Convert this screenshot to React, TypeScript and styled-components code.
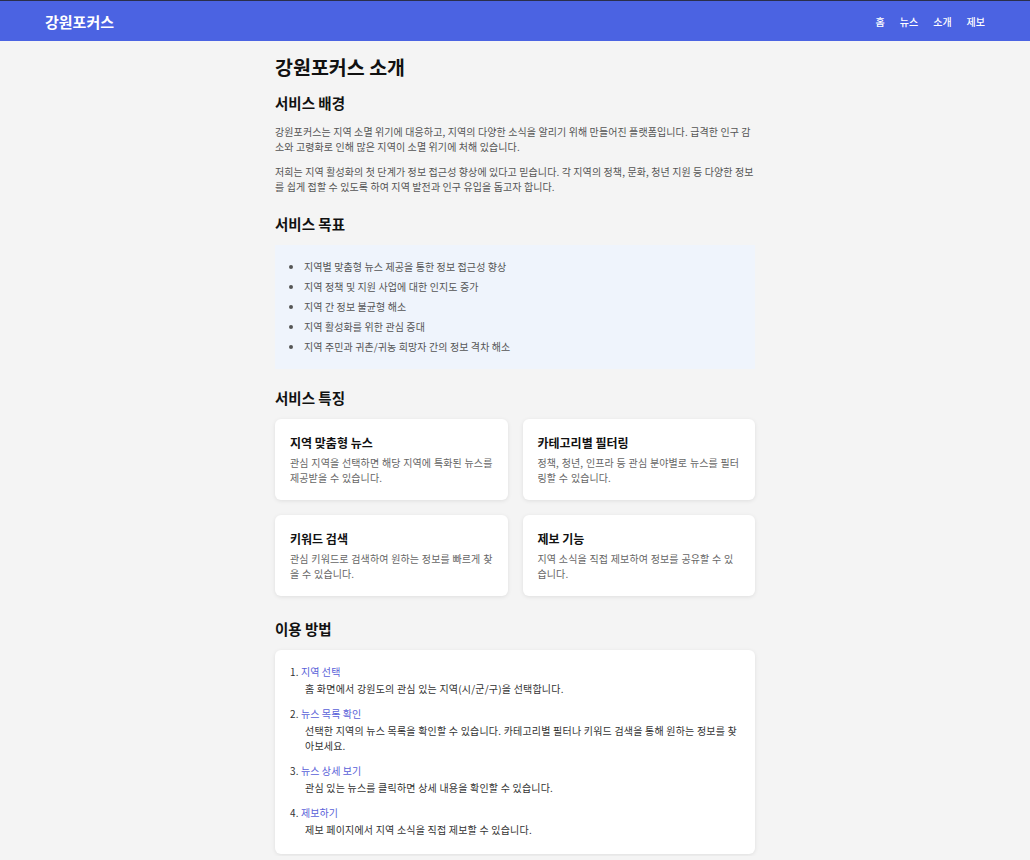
import React from "react";
import styled, { createGlobalStyle } from "styled-components";

const GlobalStyle = createGlobalStyle`
  html, body { margin: 0; padding: 0; }
  body {
    background: #f4f4f4;
    font-family: "Noto Sans CJK KR", "Noto Sans", sans-serif;
    color: #222;
  }
`;

const Header = styled.header`
  height: 40px;
  border-top: 1px solid #2a2f4a;
  background: #4b63e2;
  display: flex;
  align-items: center;
  justify-content: space-between;
  padding: 0 45px;
`;

const Logo = styled.div`
  color: #fff;
  font-size: 15px;
  font-weight: 700;
`;

const Nav = styled.nav`
  display: flex;
  gap: 15px;
`;

const NavLink = styled.a`
  color: #fff;
  font-size: 10px;
  font-weight: 500;
  text-decoration: none;
`;

const Main = styled.main`
  width: 480px;
  margin: 0 auto;
  padding: 14px 0 2px;
`;

const Title = styled.h1`
  font-size: 19.5px;
  line-height: 24px;
  font-weight: 700;
  margin: 0 0 14px;
  color: #111;
`;

const Section = styled.section<{ $gap?: number }>`
  margin-bottom: ${(p) => p.$gap ?? 20}px;
  &:last-child { margin-bottom: 0; }
`;

const H2 = styled.h2`
  font-size: 14.5px;
  line-height: 20px;
  font-weight: 700;
  margin: 0 0 11px;
  color: #111;
`;

const Para = styled.p`
  font-size: 10px;
  line-height: 15px;
  letter-spacing: 0.1px;
  color: #555;
  margin: 0 0 10px;
  &:last-child { margin-bottom: 0; }
`;

const GoalBox = styled.div`
  background: #eff4fc;
  padding: 12px 15px 12px;
`;

const GoalList = styled.ul`
  margin: 0;
  padding-left: 14px;
`;

const GoalItem = styled.li`
  font-size: 10px;
  line-height: 20px;
  letter-spacing: 0.1px;
  color: #555;
`;

const CardGrid = styled.div`
  display: grid;
  grid-template-columns: 1fr 1fr;
  column-gap: 15px;
  row-gap: 15px;
`;

const Card = styled.div<{ $pad?: string }>`
  background: #fff;
  border-radius: 6px;
  box-shadow: 0 1px 4px rgba(0, 0, 0, 0.09);
  padding: ${(p) => p.$pad || "15px 15px 15px"};
`;

const CardTitle = styled.h3`
  font-size: 12px;
  line-height: 18px;
  font-weight: 700;
  margin: 0 0 3px;
  color: #111;
`;

const CardDesc = styled.p`
  font-size: 10px;
  line-height: 15px;
  letter-spacing: 0.1px;
  word-spacing: 0.4px;
  color: #666;
  margin: 0;
`;

const StepList = styled.ol`
  list-style: none;
  margin: 0;
  padding: 0;
`;

const Step = styled.li`
  margin-bottom: 10px;
  &:last-child { margin-bottom: 0; }
`;

const StepHead = styled.div`
  font-size: 10px;
  line-height: 16px;
  letter-spacing: 0.1px;
  color: #333;
`;

const StepName = styled.span`
  color: #5a5fd8;
`;

const StepDesc = styled.div`
  font-size: 10px;
  line-height: 15px;
  letter-spacing: 0.2px;
  color: #333;
  margin-top: 1px;
  padding-left: 15px;
`;

const features = [
  { t: "지역 맞춤형 뉴스", d: "관심 지역을 선택하면 해당 지역에 특화된 뉴스를 제공받을 수 있습니다." },
  { t: "카테고리별 필터링", d: "정책, 청년, 인프라 등 관심 분야별로 뉴스를 필터링할 수 있습니다." },
  { t: "키워드 검색", d: "관심 키워드로 검색하여 원하는 정보를 빠르게 찾을 수 있습니다." },
  { t: "제보 기능", d: "지역 소식을 직접 제보하여 정보를 공유할 수 있습니다." },
];

const goals = [
  "지역별 맞춤형 뉴스 제공을 통한 정보 접근성 향상",
  "지역 정책 및 지원 사업에 대한 인지도 증가",
  "지역 간 정보 불균형 해소",
  "지역 활성화를 위한 관심 증대",
  "지역 주민과 귀촌/귀농 희망자 간의 정보 격차 해소",
];

const steps = [
  { t: "지역 선택", d: "홈 화면에서 강원도의 관심 있는 지역(시/군/구)을 선택합니다." },
  { t: "뉴스 목록 확인", d: "선택한 지역의 뉴스 목록을 확인할 수 있습니다. 카테고리별 필터나 키워드 검색을 통해 원하는 정보를 찾아보세요." },
  { t: "뉴스 상세 보기", d: "관심 있는 뉴스를 클릭하면 상세 내용을 확인할 수 있습니다." },
  { t: "제보하기", d: "제보 페이지에서 지역 소식을 직접 제보할 수 있습니다." },
];

export default function App() {
  return (
    <>
      <GlobalStyle />
      <Header>
        <Logo>강원포커스</Logo>
        <Nav>
          <NavLink href="#">홈</NavLink>
          <NavLink href="#">뉴스</NavLink>
          <NavLink href="#">소개</NavLink>
          <NavLink href="#">제보</NavLink>
        </Nav>
      </Header>
      <Main>
        <Title>강원포커스 소개</Title>
        <Section>
          <H2>서비스 배경</H2>
          <Para>
            강원포커스는 지역 소멸 위기에 대응하고, 지역의 다양한 소식을 알리기 위해 만들어진 플랫폼입니다. 급격한 인구 감소와 고령화로 인해 많은 지역이 소멸 위기에 처해 있습니다.
          </Para>
          <Para>
            저희는 지역 활성화의 첫 단계가 정보 접근성 향상에 있다고 믿습니다. 각 지역의 정책, 문화, 청년 지원 등 다양한 정보를 쉽게 접할 수 있도록 하여 지역 발전과 인구 유입을 돕고자 합니다.
          </Para>
        </Section>
        <Section $gap={19}>
          <H2>서비스 목표</H2>
          <GoalBox>
            <GoalList>
              {goals.map((g) => (
                <GoalItem key={g}>{g}</GoalItem>
              ))}
            </GoalList>
          </GoalBox>
        </Section>
        <Section $gap={23}>
          <H2>서비스 특징</H2>
          <CardGrid>
            {features.map((f) => (
              <Card key={f.t}>
                <CardTitle>{f.t}</CardTitle>
                <CardDesc>{f.d}</CardDesc>
              </Card>
            ))}
          </CardGrid>
        </Section>
        <Section>
          <H2>이용 방법</H2>
          <Card $pad="14px 15px 17px">
            <StepList>
              {steps.map((s, i) => (
                <Step key={s.t}>
                  <StepHead>
                    {i + 1}. <StepName>{s.t}</StepName>
                  </StepHead>
                  <StepDesc>{s.d}</StepDesc>
                </Step>
              ))}
            </StepList>
          </Card>
        </Section>
      </Main>
    </>
  );
}
